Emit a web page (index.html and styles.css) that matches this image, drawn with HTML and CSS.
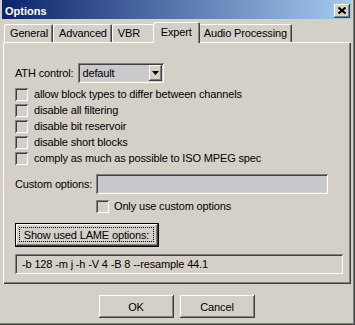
FILE: index.html
```html
<!DOCTYPE html>
<html>
<head>
    <link rel="stylesheet" href="styles.css">
</head>
<body>
    <div class="window">
        <div class="titlebar">
            <span class="title">Options</span>
            <div class="close-btn">
                <svg width="8" height="7" viewBox="0 0 8 7">
                    <path d="M0.5 0.5L7.5 6.5M7.5 0.5L0.5 6.5" stroke="#000" stroke-width="2" fill="none"/>
                </svg>
            </div>
        </div>

        <div class="tabs">
            <div class="tab">General</div>
            <div class="tab">Advanced</div>
            <div class="tab tab-vbr">VBR</div>
            <div class="tab tab-active">Expert</div>
            <div class="tab">Audio Processing</div>
        </div>

        <div class="panel">
            <div class="ath-row">
                <span>ATH control:</span>
                <div class="combo">
                    <span class="combo-text">default</span>
                    <div class="combo-btn">
                        <svg width="7" height="4" viewBox="0 0 7 4">
                            <path d="M0 0H7L3.5 4Z" fill="#000"/>
                        </svg>
                    </div>
                </div>
            </div>

            <div class="checks">
                <label class="check"><span class="box"></span>allow block types to differ between channels</label>
                <label class="check"><span class="box"></span>disable all filtering</label>
                <label class="check"><span class="box"></span>disable bit reservoir</label>
                <label class="check"><span class="box"></span>disable short blocks</label>
                <label class="check"><span class="box"></span>comply as much as possible to ISO MPEG spec</label>
            </div>

            <div class="custom-row">
                <span>Custom options:</span>
                <div class="field field-custom"></div>
            </div>
            <label class="check check-only"><span class="box"></span>Only use custom options</label>

            <div class="btn btn-default"><span class="focus">Show used LAME options:</span></div>

            <div class="field field-output">-b 128 -m j -h -V 4 -B 8 --resample 44.1</div>
        </div>

        <div class="actions">
            <div class="btn btn-action">OK</div>
            <div class="btn btn-action">Cancel</div>
        </div>
    </div>
</body>
</html>
```
FILE: styles.css
```css
body {
    margin: 0;
    background: #d4d0c8;
    font-family: "Liberation Sans", Arial, sans-serif;
    font-size: 11px;
    letter-spacing: -0.15px;
    color: #000;
}
.window {
    width: 355px;
    height: 325px;
    box-sizing: border-box;
    padding: 0 3px 3px 2px;
    background: #d4d0c8;
    box-shadow: inset -1px -1px #404040, inset -2px -2px #808080;
}
.titlebar {
    height: 19px;
    box-sizing: border-box;
    padding: 2px 2px 0 3px;
    display: flex;
    align-items: center;
    justify-content: space-between;
    background: linear-gradient(to right, #0a246a, #a6caf0);
}
.title {
    color: #fff;
    font-weight: bold;
    letter-spacing: 0;
}
.close-btn {
    width: 16px;
    height: 14px;
    display: flex;
    align-items: center;
    justify-content: center;
    background: #d4d0c8;
    box-shadow: inset -1px -1px #404040, inset 1px 1px #fff, inset -2px -2px #808080;
}
.tabs {
    height: 23px;
    padding-left: 2px;
    display: flex;
    align-items: flex-end;
}
.tab {
    height: 18px;
    box-sizing: border-box;
    padding: 0 5px 0 6px;
    display: flex;
    align-items: center;
    border-radius: 2px 2px 0 0;
    box-shadow: inset 1px 1px #fff, inset -1px 0 #404040, inset -2px 0 #808080;
}
.tab-vbr {
    min-width: 43px;
}
.tab-active {
    position: relative;
    z-index: 1;
    height: 21px;
    margin: 0 -2px -1px;
    padding: 0 8px 2px;
    background: #d4d0c8;
}
.panel {
    height: 242px;
    box-sizing: border-box;
    margin: 0 1px;
    padding: 21px 8px 0 12px;
    box-shadow: inset 1px 1px #fff, inset -1px -1px #404040, inset -2px -2px #808080;
}
.ath-row {
    display: flex;
    align-items: center;
    gap: 4px;
    height: 20px;
}
.combo {
    width: 86px;
    height: 20px;
    box-sizing: border-box;
    padding: 2px;
    display: flex;
    align-items: center;
    justify-content: space-between;
    background: #cbc9cc;
    box-shadow: inset 1px 1px #808080, inset -1px -1px #fff, inset 2px 2px #404040, inset -2px -2px #d4d0c8;
}
.combo-text {
    padding-left: 3px;
}
.combo-btn {
    width: 13px;
    height: 16px;
    display: flex;
    align-items: center;
    justify-content: center;
    background: #d4d0c8;
    box-shadow: inset -1px -1px #404040, inset 1px 1px #fff, inset -2px -2px #808080;
}
.checks {
    margin-top: 3px;
}
.check {
    height: 16px;
    display: flex;
    align-items: center;
    gap: 6px;
}
.box {
    width: 13px;
    height: 13px;
    flex: none;
    background: #d4d0c8;
    box-shadow: inset 1px 1px #808080, inset -1px -1px #fff, inset 2px 2px #404040, inset -2px -2px #d4d0c8;
}
.custom-row {
    margin-top: 8px;
    display: flex;
    align-items: center;
    justify-content: space-between;
    width: 313px;
}
.field {
    height: 20px;
    box-sizing: border-box;
    box-shadow: inset 1px 1px #808080, inset -1px -1px #fff, inset 2px 2px #404040, inset -2px -2px #d4d0c8;
}
.field-custom {
    width: 232px;
    background: #c8c7cb;
}
.check-only {
    margin-top: 4px;
    margin-left: 81px;
    gap: 5px;
}
.btn {
    display: flex;
    align-items: center;
    justify-content: center;
    box-sizing: border-box;
    background: #d4d0c8;
    box-shadow: inset -1px -1px #404040, inset 1px 1px #fff, inset -2px -2px #808080;
}
.btn-default {
    margin-top: 9px;
    width: 144px;
    height: 24px;
    padding: 1px;
    border: 1px solid #000;
}
.focus {
    flex: 1;
    align-self: stretch;
    margin: 2px 3px 3px 2px;
    display: flex;
    align-items: center;
    justify-content: center;
    outline: 1px dotted #000;
    outline-offset: -1px;
}
.field-output {
    margin-top: 7px;
    width: 328px;
    padding-left: 7px;
    display: flex;
    align-items: center;
}
.actions {
    margin-top: 11px;
    display: flex;
    justify-content: center;
    gap: 6px;
    padding-right: 1px;
}
.btn-action {
    width: 75px;
    height: 23px;
}
```
